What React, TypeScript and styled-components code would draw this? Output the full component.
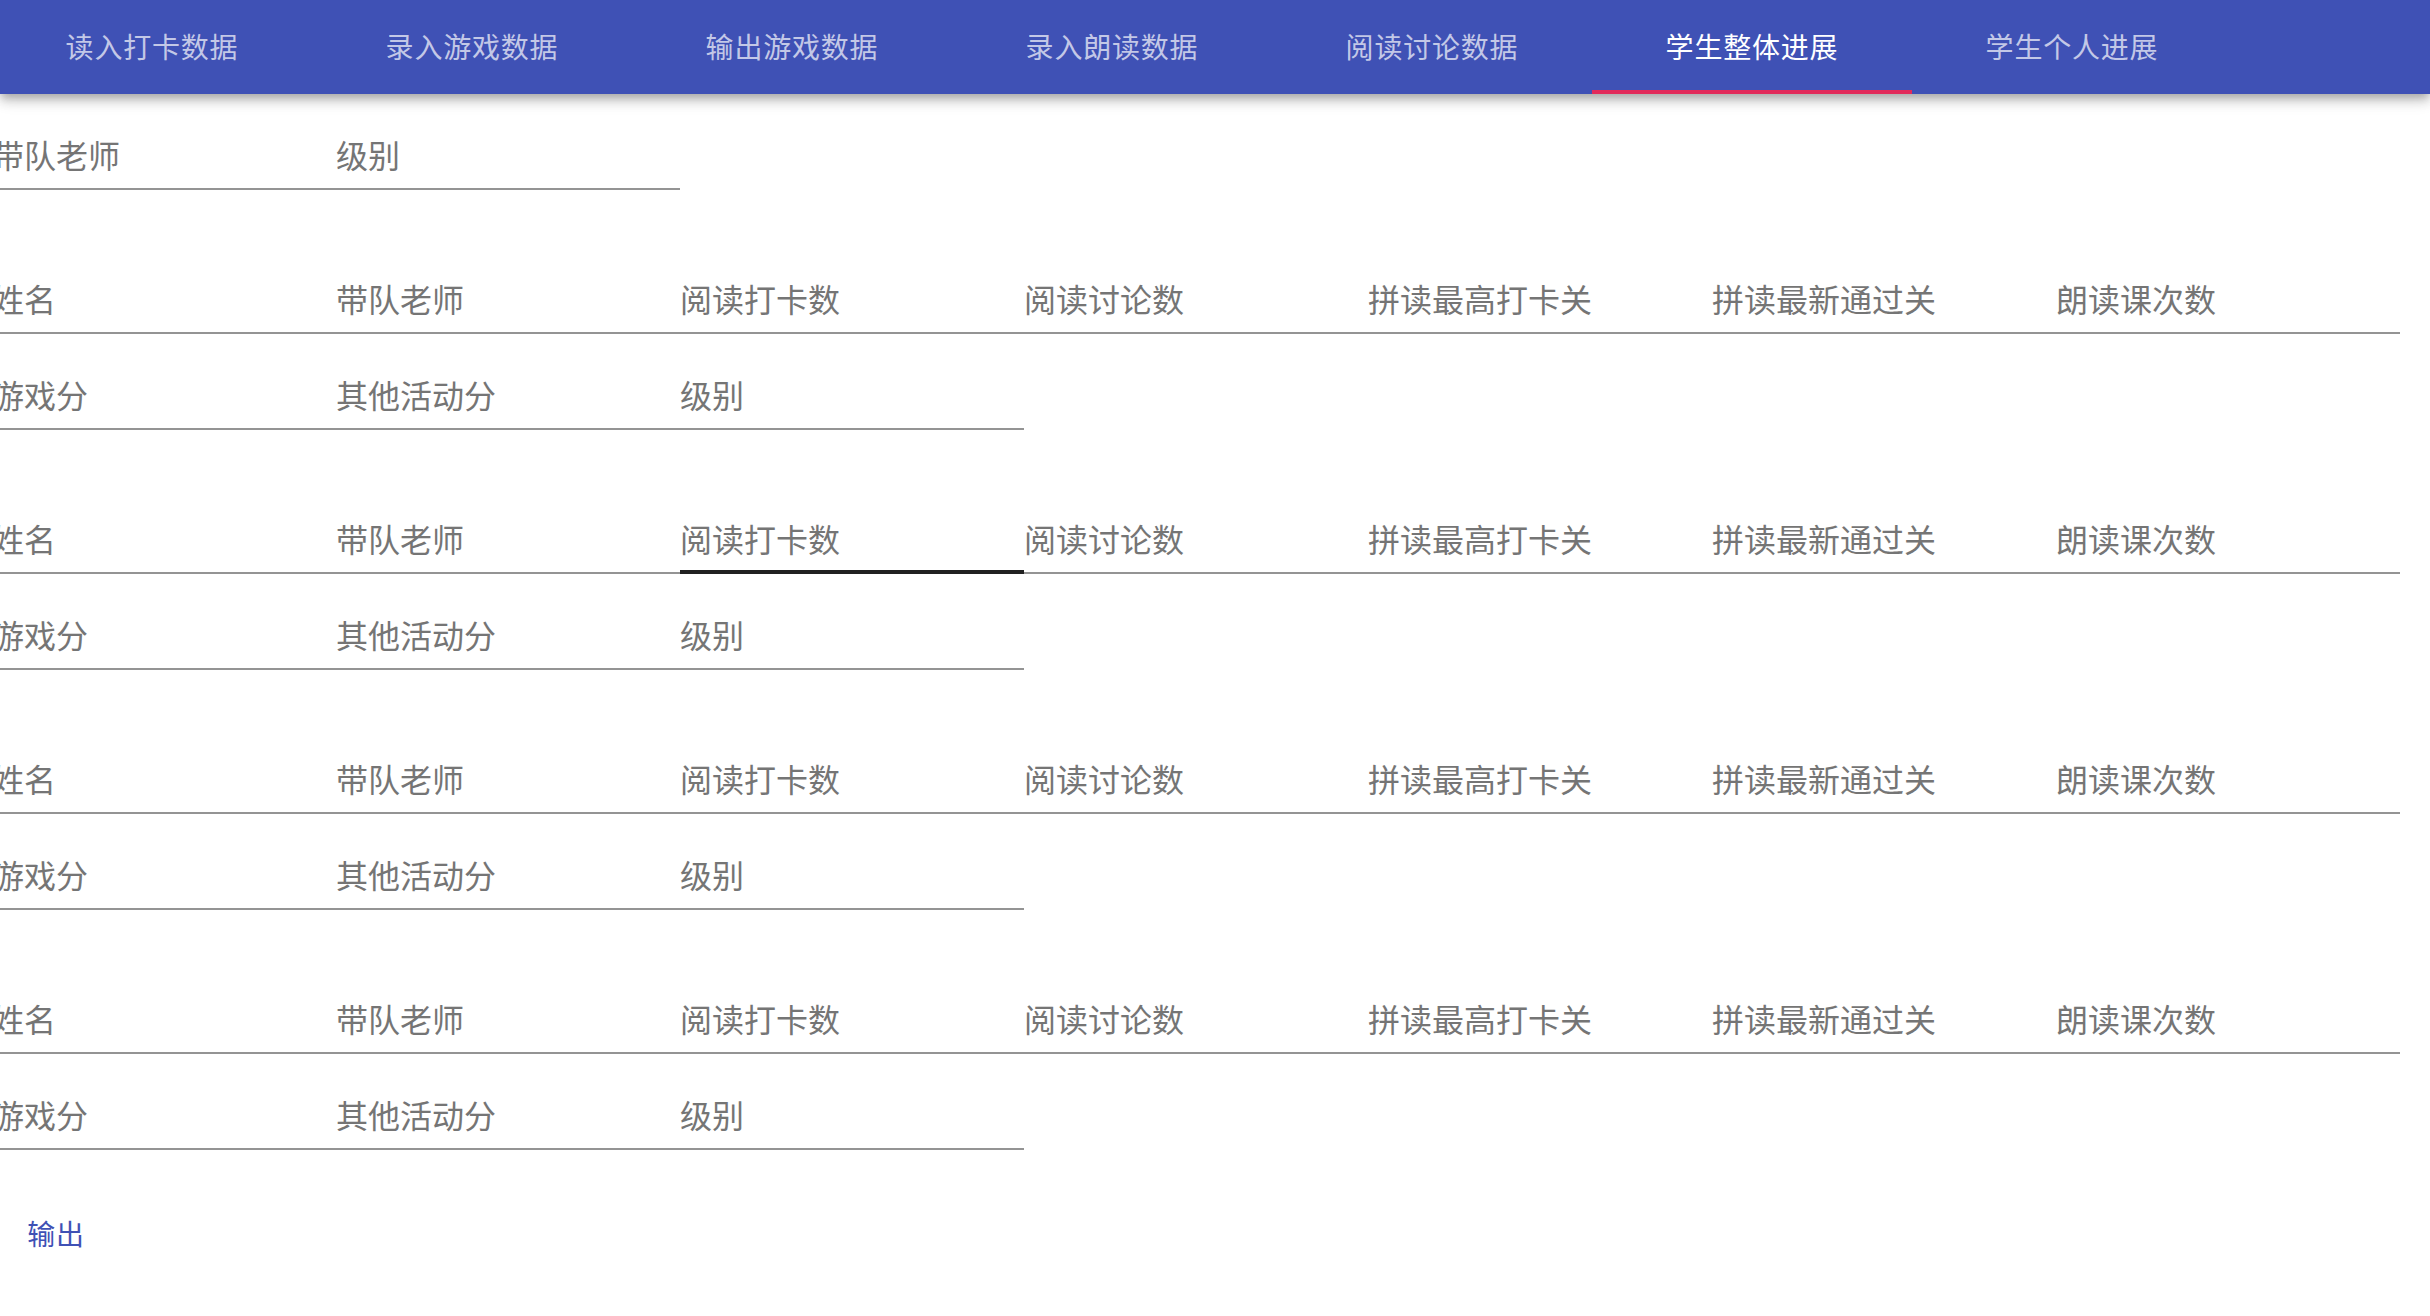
import React, { useState } from 'react';
import styled, { createGlobalStyle } from 'styled-components';

const GlobalStyle = createGlobalStyle`
  html, body {
    margin: 0;
    padding: 0;
    background: #fff;
    font-family: Roboto, "Noto Sans CJK SC", sans-serif;
  }
`;

// the whole page sits 8px left of the window edge, like the original
const Page = styled.div`
  margin-left: -8px;
`;

const AppBar = styled.header`
  display: flex;
  height: 94px;
  margin-left: 8px;
  background: #3f51b5;
  box-shadow: 0 4px 8px -2px rgba(0, 0, 0, 0.2), 0 8px 10px 0 rgba(0, 0, 0, 0.14),
    0 2px 20px 0 rgba(0, 0, 0, 0.12);
  position: relative;
  z-index: 2;
`;

const TabList = styled.nav`
  display: flex;
  margin-left: -8px;
`;

const Tab = styled.button<{ $active?: boolean }>`
  width: 320px;
  height: 94px;
  border: none;
  background: transparent;
  padding: 0 0 3px;
  font-family: inherit;
  font-size: 28px;
  letter-spacing: 0.8px;
  color: ${(p) => (p.$active ? '#ffffff' : 'rgba(255, 255, 255, 0.7)')};
  box-shadow: ${(p) => (p.$active ? 'inset 0 -4px 0 #e22b5b' : 'none')};
  cursor: pointer;
`;

const Content = styled.main`
  display: flex;
  flex-direction: column;
  gap: 48px;
`;

const Group = styled.section`
  display: flex;
  flex-direction: column;
`;

const Row = styled.div`
  display: flex;
`;

const Field = styled.label<{ $hover?: boolean }>`
  width: 344px;
  height: 96px;
  display: flex;
  align-items: flex-end;
  box-shadow: ${(p) => (p.$hover ? 'inset 0 -4px 0 #212121' : 'inset 0 -2px 0 #949494')};
  cursor: text;
`;

const FieldLabel = styled.span`
  font-size: 32px;
  line-height: 32px;
  color: #757575;
  margin-bottom: 17px;
  white-space: nowrap;
`;

const OutputButton = styled.button`
  align-self: flex-start;
  min-width: 128px;
  height: 72px;
  padding: 0 16px 3px;
  border: none;
  background: transparent;
  font-family: inherit;
  font-size: 28px;
  letter-spacing: 0.8px;
  color: #3f51b5;
  cursor: pointer;
`;

const tabs = ['读入打卡数据', '录入游戏数据', '输出游戏数据', '录入朗读数据', '阅读讨论数据', '学生整体进展', '学生个人进展'];

const firstLine = ['姓名', '带队老师', '阅读打卡数', '阅读讨论数', '拼读最高打卡关', '拼读最新通过关', '朗读课次数'];
const secondLine = ['游戏分', '其他活动分', '级别'];

const App: React.FC = () => {
  const [active, setActive] = useState(5);
  return (
    <Page>
      <GlobalStyle />
      <AppBar>
        <TabList>
          {tabs.map((t, i) => (
            <Tab key={t} $active={i === active} onClick={() => setActive(i)}>
              {t}
            </Tab>
          ))}
        </TabList>
      </AppBar>
      <Content>
        <Row>
          <Field><FieldLabel>带队老师</FieldLabel></Field>
          <Field><FieldLabel>级别</FieldLabel></Field>
        </Row>
        {[0, 1, 2, 3].map((g) => (
          <Group key={g}>
            <Row>
              {firstLine.map((l, i) => (
                <Field key={l} $hover={g === 1 && i === 2}>
                  <FieldLabel>{l}</FieldLabel>
                </Field>
              ))}
            </Row>
            <Row>
              {secondLine.map((l) => (
                <Field key={l}><FieldLabel>{l}</FieldLabel></Field>
              ))}
            </Row>
          </Group>
        ))}
        <OutputButton>输出</OutputButton>
      </Content>
    </Page>
  );
};

export default App;
